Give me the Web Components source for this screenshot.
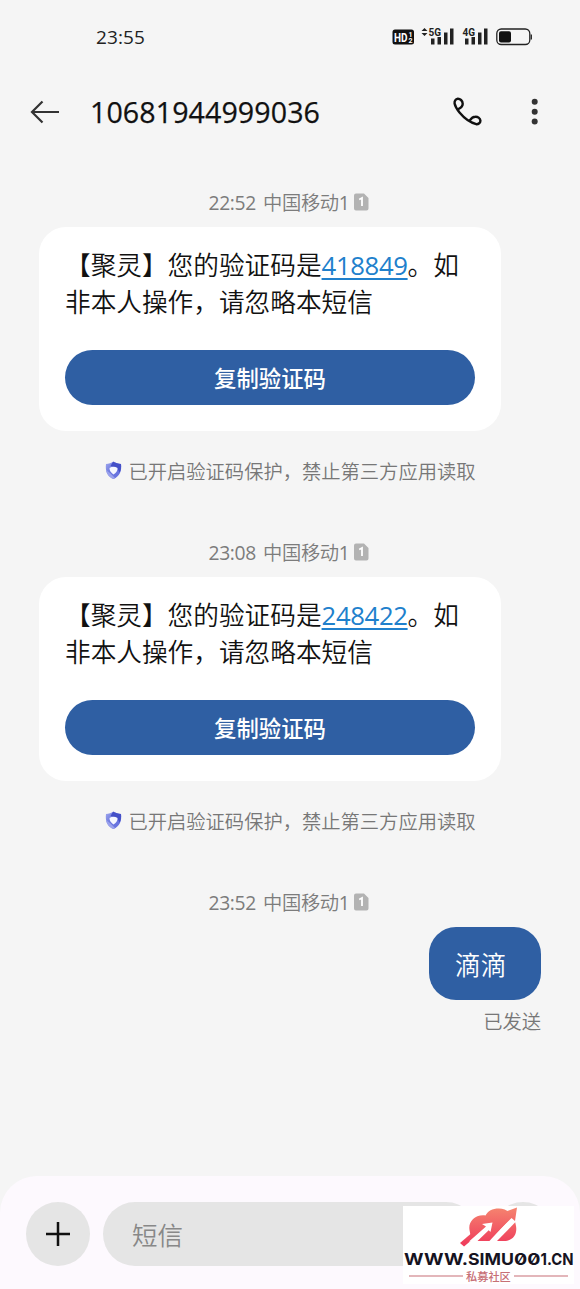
<!DOCTYPE html>
<html lang="zh-CN">
<head>
<meta charset="utf-8">
<title>短信</title>
<style>
html,body{margin:0;height:1289px;overflow:hidden;background:#f5f5f5}
body{font-family:"Open Sans","Noto Sans CJK SC",sans-serif;color:#111}
</style>
</head>
<body>
<sms-app></sms-app>
<script>
const define=(name,html)=>customElements.define(name,class extends HTMLElement{
  constructor(){super();this.attachShadow({mode:'open'}).innerHTML=html;}
});

define('status-bar',`<style>
:host{display:flex;height:74px;box-sizing:border-box;padding:0 48px 0 96px;align-items:center;justify-content:space-between}
span{font-size:19px;font-weight:500;letter-spacing:.1px;color:#222}
svg{display:block}
</style><span>23:55</span>
<svg width="142" height="26" viewBox="390 24 142 26">
<rect x="392.500" y="29.500" width="21.500" height="15" rx="2.500" fill="#111"/>
<g font-family="Roboto,sans-serif" font-weight="700">
<text x="394" y="41.500" font-size="12" fill="#fff" textLength="13.500" lengthAdjust="spacingAndGlyphs">HD</text>
<text x="408.500" y="36.800" font-size="7" fill="#fff">1</text><text x="408.500" y="43" font-size="7" fill="#fff">2</text>
<text x="428.500" y="35.800" font-size="11" fill="#222" textLength="12.500" lengthAdjust="spacingAndGlyphs">5G</text>
<text x="462.500" y="35.800" font-size="11" fill="#222" textLength="12.500" lengthAdjust="spacingAndGlyphs">4G</text></g>
<path d="M421.500 31l3-3 3 3zM421.500 33l3 3 3-3z" fill="#222"/>
<path d="M431 38.500h3.500v6H431zM437.500 37h3.500v7.500h-3.500zM444 32.500h3.500v12H444zM450 28.500h3.500v16H450zM465 38.500h3.500v6H465zM471.500 37h3.500v7.500h-3.500zM478 32.500h3.500v12H478zM484 28.500h3.500v16H484z" fill="#222"/>
<rect x="496.800" y="29" width="33" height="15.500" rx="4.500" fill="none" stroke="#222" stroke-width="1.300"/>
<rect x="499" y="31.200" width="12" height="11.200" rx="2" fill="#111"/><path d="M531.300 34.500v5" stroke="#222" stroke-width="1.300"/>
</svg>`);

define('chat-header',`<style>
:host{display:flex;height:76px;box-sizing:border-box;align-items:center;padding:0 30px}
h1{margin:0 0 0 30px;width:361px;font-size:28.6px;font-weight:500;line-height:40px;letter-spacing:.08px;color:#111;-webkit-text-stroke:.25px #111}
svg{display:block;flex:none}
.more{margin-left:auto}
</style>
<svg width="30" height="24" viewBox="30 100 30 24" fill="none" stroke="#333" stroke-width="2.200"><path d="M59 112H32M42.500 101.500L32 112l10.500 10.500"/></svg>
<h1><slot></slot></h1>
<svg width="32" height="32" viewBox="451 96 32 32" fill="none" stroke="#111" stroke-width="2.400" stroke-linejoin="round"><path d="M458.500 109C461.200 107.600 462.800 106 462.700 103.700 462.600 100.500 460 98.700 457.800 98.800 455.500 99 454.300 101.200 454.600 103.600 455.300 107 457 109.500 459.500 112.500 464.500 118.500 469.500 122.300 476.200 124.200 478.600 124.300 480.400 122.700 480.400 120.700 480.200 118 477.700 116.600 475.300 116.700 473 116.700 471.200 118.300 469.800 120.400"/></svg>
<svg class="more" width="30" height="32" viewBox="520 96 30 32" fill="#333"><circle cx="534.700" cy="101.800" r="3"/><circle cx="534.700" cy="111.800" r="3"/><circle cx="534.700" cy="121.600" r="3"/></svg>`);

define('time-label',`<style>
:host{display:flex;justify-content:center;align-items:center;height:30px;font-size:19.3px;color:#7c7c7c;font-weight:400;gap:5px;padding-right:2px;white-space:pre}
i{font-style:normal;font-family:"Open Sans","Noto Sans CJK SC DemiLight","Noto Sans CJK SC",sans-serif;letter-spacing:-.35px;word-spacing:2.500px;position:relative;top:-.5px}
svg{display:block}
</style><i><slot></slot></i>
<svg width="15" height="18" viewBox="0 0 15 18"><path d="M2 .5H10L14.500 5V15.500a2 2 0 0 1-2 2H2a2 2 0 0 1-2-2V2.500a2 2 0 0 1 2-2z" fill="#b3b3b3"/><path d="M5.200 6.500L8 5v8" fill="none" stroke="#fff" stroke-width="1.800"/></svg>`);

define('code-card',`<style>
:host{display:block;margin:10px 79px 0 39px;padding:20px 26px 26px;height:158px;background:#fff;border-radius:27px}
p{margin:0;font-size:25.67px;line-height:37px;font-weight:350;color:#111;white-space:nowrap;text-spacing-trim:space-all}
u{color:#2080cc;font-weight:400;text-decoration-thickness:1.5px;text-underline-offset:3px;letter-spacing:-.33px}
button{display:block;width:100%;height:55px;margin:29px 0 0;border:0;border-radius:28px;background:#2f5fa3;color:#fff;font:500 22.4px/55px "Noto Sans CJK SC",sans-serif;padding:0}
</style><p>【聚灵】您的验证码是<u><slot></slot></u>。如<br>非本人操作，请忽略本短信</p><button>复制验证码</button>`);

define('protect-note',`<style>
:host{display:flex;justify-content:center;align-items:center;height:30px;margin-top:25px;margin-bottom:51px;padding-left:2px;gap:6px;font-size:19.3px;font-weight:350;color:#777;white-space:nowrap}
svg{display:block;margin:-2px 0 0 -1px}
</style><svg width="17" height="19" viewBox="0 0 17 19"><defs><linearGradient id="g" x1="0" y1="0" x2="1" y2="1"><stop offset="0" stop-color="#a3abed"/><stop offset=".45" stop-color="#6a76df"/><stop offset="1" stop-color="#6671df"/></linearGradient></defs>
<path d="M8.500 .5C10.500 2 13.500 2.800 16 3 17 10 14.500 15.500 8.500 18 2.500 15.500 0 10 1 3 3.500 2.800 6.500 2 8.500 .5z" fill="url(#g)"/><path d="M1 9Q2 15.500 8.500 18L10 17 5 12z" fill="#99a1ec"/><path d="M8 .8C10.500 2 13.500 2.800 16 3 16.300 6 16 9 14.700 11.500L12 7 5.500 5z" fill="#4450c8"/><path d="M4.500 7Q8.500 4.500 12.500 7 12.800 10.800 8.600 13.500 4.300 10.800 4.500 7z" fill="#f5f7ff"/></svg><span>已开启验证码保护，禁止第三方应用读取</span>`);

define('sent-message',`<style>
:host{display:flex;flex-direction:column;align-items:flex-end;margin:10px 39px 0 0}
div{width:112px;height:73px;box-sizing:border-box;padding-left:26px;border-radius:27px;background:#2f5fa3;color:#fff;font-size:25.67px;line-height:77px;font-weight:350}
span{font-size:19.3px;line-height:28px;margin-top:8px;color:#777;font-weight:350}
</style><div><slot></slot></div><span>已发送</span>`);

define('compose-bar',`<style>
:host{display:flex;box-sizing:border-box;height:113px;padding:26px 25px 0 26px;background:#fdf9fe;border-radius:37px 37px 0 0;gap:13px}
b{flex:none;width:64px;height:64px;border-radius:32px;background:#e5e5e5}
div{flex:1;height:64px;border-radius:32px;background:#e5e5e5;color:#888;font-size:25.5px;line-height:67px;font-weight:350;padding-left:29px}
svg{display:block}
</style><b><svg width="64" height="64"><path d="M20 32h24M32 20v24" stroke="#111" stroke-width="2.500"/></svg></b><div>短信</div><b></b>`);

define('site-mark',`<style>
:host{display:block;width:171px;height:78px;background:#fff}
svg{display:block;overflow:visible}
</style><svg width="171" height="78" viewBox="403 1206 171 78"><defs><linearGradient id="c" gradientUnits="userSpaceOnUse" x1="0" y1="1208" x2="0" y2="1246"><stop offset="0" stop-color="#f5836f"/><stop offset="1" stop-color="#ef3a5b"/></linearGradient></defs>
<path d="M474 1241H504C513 1241 517.500 1234 516 1226 514 1213 506 1208.500 499 1208.500 492 1208.500 488 1211 485.500 1215.500 475 1214 468 1222 469.500 1230 470 1235 472 1239 474 1241z" fill="url(#c)"/>
<path d="M464 1247L487 1227.500 490 1229 477 1241.500V1247z" fill="#fff"/>
<path d="M460 1243L484 1222.500 488 1226.500 464 1246.500z" fill="url(#c)"/>
<path d="M482 1224l10.500-1.500-2 9.500-2.500-2.500L475.500 1241.500H469L486 1226.500z" fill="#fff"/>
<path d="M488.500 1242L512 1216.500 516 1221.500 496 1242z" fill="#fff"/>
<path d="M503.500 1212.500L517 1207.500 515 1221 511.500 1218 494 1235 489.500 1233 507 1215.500z" fill="url(#c)"/>
<g font-family="Inter,sans-serif" font-size="16.200" font-weight="700" fill="#16131f">
<text x="404" y="1265" textLength="64" lengthAdjust="spacingAndGlyphs">WWW.</text>
<text x="468" y="1265" textLength="46" lengthAdjust="spacingAndGlyphs">SIMU</text>
<text x="514" y="1265" textLength="26.500" lengthAdjust="spacingAndGlyphs" style="font-feature-settings:'zero'">00</text>
<text x="540.500" y="1265" textLength="33" lengthAdjust="spacingAndGlyphs">1.CN</text></g>
<path d="M409 1276H463M514 1276H568" stroke="#c76f76" stroke-width="1.200"/>
<text x="466" y="1280.500" font-family="Noto Sans CJK SC,sans-serif" font-size="11.200" font-weight="500" fill="#c76f76">私募社区</text></svg>`);

define('sms-app',`<style>
:host{display:flex;flex-direction:column;position:relative;width:580px;height:1289px;background:#f5f5f5}
main{flex:1;padding-top:37px}
site-mark{position:absolute;left:403px;top:1206px}
</style><status-bar></status-bar><chat-header>10681944999036</chat-header>
<main><time-label>22:52 中国移动1</time-label><code-card>418849</code-card><protect-note></protect-note>
<time-label>23:08 中国移动1</time-label><code-card>248422</code-card><protect-note></protect-note>
<time-label>23:52 中国移动1</time-label><sent-message>滴滴</sent-message></main>
<compose-bar></compose-bar><site-mark></site-mark>`);
</script>
</body>
</html>
